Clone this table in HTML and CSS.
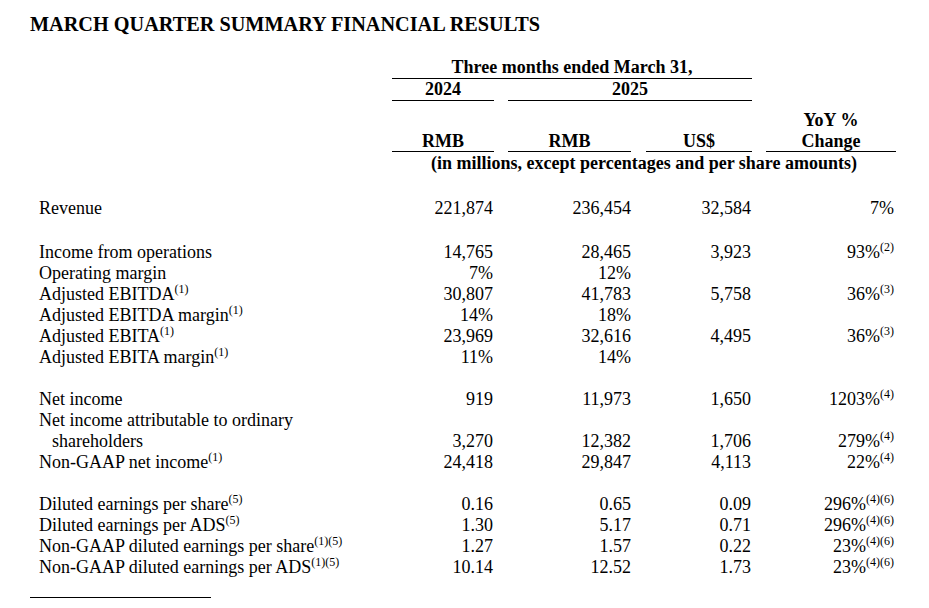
FILE: index.html
```html
<!DOCTYPE html>
<html lang="en">
<head>
<meta charset="utf-8">
<title>March Quarter Summary Financial Results</title>
<link rel="stylesheet" href="styles.css">
</head>
<body>
<main class="page">
  <h1 class="title">MARCH QUARTER SUMMARY FINANCIAL RESULTS</h1>
  <table class="fin">
    <colgroup>
      <col class="w-label">
      <col class="w-c1">
      <col class="w-c2">
      <col class="w-c3">
      <col class="w-c4">
    </colgroup>
    <thead>
      <tr class="h-period">
        <th></th>
        <th colspan="3"><div class="ul">Three months ended March 31,</div></th>
        <th></th>
      </tr>
      <tr class="h-year">
        <th></th>
        <th><div class="ul">2024</div></th>
        <th colspan="2" class="g2"><div class="ul">2025</div></th>
        <th></th>
      </tr>
      <tr class="h-yoy">
        <th></th><th></th><th></th><th></th>
        <th class="g4"><div class="plain">YoY %</div></th>
      </tr>
      <tr class="h-cur">
        <th></th>
        <th><div class="ul">RMB</div></th>
        <th class="g2"><div class="ul">RMB</div></th>
        <th class="g3"><div class="ul">US$</div></th>
        <th class="g4"><div class="ul">Change</div></th>
      </tr>
      <tr class="h-note">
        <th></th>
        <th colspan="4">(in millions, except percentages and per share amounts)</th>
      </tr>
    </thead>
    <tbody>
      <tr class="blank first"><td colspan="5"></td></tr>
      <tr><td class="lbl">Revenue</td><td>221,874</td><td>236,454</td><td>32,584</td><td>7%</td></tr>
      <tr class="blank second"><td colspan="5"></td></tr>
      <tr><td class="lbl">Income from operations</td><td>14,765</td><td>28,465</td><td>3,923</td><td>93%<sup>(2)</sup></td></tr>
      <tr><td class="lbl">Operating margin</td><td>7%</td><td>12%</td><td></td><td></td></tr>
      <tr><td class="lbl">Adjusted EBITDA<sup>(1)</sup></td><td>30,807</td><td>41,783</td><td>5,758</td><td>36%<sup>(3)</sup></td></tr>
      <tr><td class="lbl">Adjusted EBITDA margin<sup>(1)</sup></td><td>14%</td><td>18%</td><td></td><td></td></tr>
      <tr><td class="lbl">Adjusted EBITA<sup>(1)</sup></td><td>23,969</td><td>32,616</td><td>4,495</td><td>36%<sup>(3)</sup></td></tr>
      <tr><td class="lbl">Adjusted EBITA margin<sup>(1)</sup></td><td>11%</td><td>14%</td><td></td><td></td></tr>
      <tr class="blank"><td colspan="5"></td></tr>
      <tr><td class="lbl">Net income</td><td>919</td><td>11,973</td><td>1,650</td><td>1203%<sup>(4)</sup></td></tr>
      <tr><td class="lbl">Net income attributable to ordinary</td><td></td><td></td><td></td><td></td></tr>
      <tr><td class="lbl indent">shareholders</td><td>3,270</td><td>12,382</td><td>1,706</td><td>279%<sup>(4)</sup></td></tr>
      <tr><td class="lbl">Non-GAAP net income<sup>(1)</sup></td><td>24,418</td><td>29,847</td><td>4,113</td><td>22%<sup>(4)</sup></td></tr>
      <tr class="blank"><td colspan="5"></td></tr>
      <tr><td class="lbl">Diluted earnings per share<sup>(5)</sup></td><td>0.16</td><td>0.65</td><td>0.09</td><td>296%<sup>(4)(6)</sup></td></tr>
      <tr><td class="lbl">Diluted earnings per ADS<sup>(5)</sup></td><td>1.30</td><td>5.17</td><td>0.71</td><td>296%<sup>(4)(6)</sup></td></tr>
      <tr><td class="lbl">Non-GAAP diluted earnings per share<sup>(1)(5)</sup></td><td>1.27</td><td>1.57</td><td>0.22</td><td>23%<sup>(4)(6)</sup></td></tr>
      <tr><td class="lbl">Non-GAAP diluted earnings per ADS<sup>(1)(5)</sup></td><td>10.14</td><td>12.52</td><td>1.73</td><td>23%<sup>(4)(6)</sup></td></tr>
    </tbody>
  </table>
  <hr class="footrule">
</main>
</body>
</html>
```
FILE: styles.css
```css
html, body {
  margin: 0;
  padding: 0;
  background: #ffffff;
}

body {
  font-family: "Liberation Serif", "Times New Roman", serif;
  color: #000000;
}

.page {
  padding: 13px 30px 0 30px;
}

.title {
  margin: 0;
  font-size: 20.25px;
  font-weight: bold;
  line-height: 22px;
}

.fin {
  margin-top: 21.5px;
  width: 866px;
  table-layout: fixed;
  border-collapse: separate;
  border-spacing: 0;
  font-size: 18px;
  line-height: 21px;
}

.w-label { width: 362px; }
.w-c1 { width: 102px; }
.w-c2 { width: 137px; }
.w-c3 { width: 121px; }
.w-c4 { width: 144px; }

.fin th {
  font-weight: bold;
  text-align: center;
  padding: 0;
  vertical-align: bottom;
}

.fin th.g2 { padding-left: 14px; }
.fin th.g3 { padding-left: 15px; }
.fin th.g4 { padding-left: 14px; }

.ul {
  border-bottom: 1.5px solid #000;
}

.h-year th { padding-top: 0.5px; }
.h-yoy th { padding-top: 8.5px; }
.h-cur .ul { line-height: 20px; }
.h-note th { padding-top: 1px; }

.fin td {
  padding: 0;
  text-align: right;
  white-space: nowrap;
  vertical-align: baseline;
}

.fin td.lbl {
  text-align: left;
  padding-left: 9px;
}

.fin td.lbl.indent {
  padding-left: 22px;
}

.fin tr.blank td {
  height: 21px;
}

.fin tr.blank.first td {
  height: 24px;
}

.fin tr.blank.second td {
  height: 23px;
}

.fin sup {
  font-size: 12px;
  line-height: 0;
  vertical-align: 0;
  position: relative;
  top: -7px;
}

.fin td:nth-child(2) { padding-right: 1px; }
.fin td:nth-child(4) { padding-right: 1px; }
.fin td:nth-child(5) { padding-right: 2px; }

.footrule {
  margin: 19.5px 0 0 0;
  width: 181px;
  border: 0;
  border-top: 1.5px solid #000;
  height: 0;
}
```
